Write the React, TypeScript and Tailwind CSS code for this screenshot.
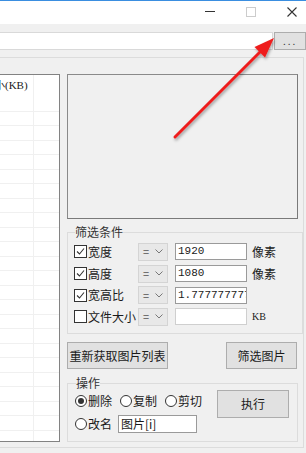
import React from "react";

const ui = "font-['Noto_Sans_CJK_SC','Noto_Sans',sans-serif]";

function Check({ on }: { on?: boolean }) {
  return (
    <span className="flex h-[13px] w-[13px] shrink-0 items-center justify-center border border-[#333] bg-white">
      {on && (
        <svg width="9" height="9" viewBox="0 0 9 9">
          <path d="M1 4.5 L3.5 7 L8 1.5" fill="none" stroke="#333" strokeWidth="1.1" />
        </svg>
      )}
    </span>
  );
}

function Radio({ on }: { on?: boolean }) {
  return (
    <span className="flex h-[12px] w-[12px] shrink-0 items-center justify-center rounded-full border border-[#333] bg-white">
      {on && <span className="h-[6px] w-[6px] rounded-full bg-[#333]" />}
    </span>
  );
}

function Combo() {
  return (
    <div className="ml-auto flex h-[18px] w-[30px] shrink-0 items-center justify-between border border-[#d4d4d4] bg-[#e8e8e8] px-[4px]">
      <span className="text-[11px] leading-none text-[#555]">=</span>
      <svg width="8" height="5" viewBox="0 0 8 5">
        <path d="M0.5 0.5 L4 4 L7.5 0.5" fill="none" stroke="#777" strokeWidth="1" />
      </svg>
    </div>
  );
}

function FilterRow({ on, label, value, unit, dim }: { on?: boolean; label: string; value: string; unit?: string; dim?: boolean }) {
  return (
    <div className="flex h-[21.7px] items-center">
      <Check on={on} />
      <span className="ml-[1px] w-[50px] whitespace-nowrap leading-none">{label}</span>
      <Combo />
      <div
        className={`ml-[7px] h-[17px] w-[72px] shrink-0 overflow-hidden whitespace-nowrap border bg-white pl-[2px] font-['Liberation_Mono',monospace] text-[11px] leading-[15px] ${
          dim ? "border-[#cfcfcf]" : "border-[#9a9a9a]"
        }`}
      >
        {value}
      </div>
      <span className={`ml-[5px] w-[44px] whitespace-nowrap leading-none ${unit === "KB" ? "font-['Liberation_Serif',serif] text-[10px]" : ""}`}>
        {unit}
      </span>
    </div>
  );
}

function Btn({ children, className }: { children: React.ReactNode; className: string }) {
  return (
    <div className={`flex items-center justify-center border border-[#adadad] bg-[#e1e1e1] ${className}`}>{children}</div>
  );
}

export default function App() {
  return (
    <div className={`relative h-[453px] w-[306px] overflow-hidden bg-[#f0f0f0] text-[12px] text-[#1a1a1a] ${ui}`}>
      {/* title bar */}
      <div className="relative flex h-[24px] items-start border-t border-[#3a8ee0] bg-white">
        <div className="ml-[205px] mt-[10px] h-[1px] w-[10px] bg-[#333]" />
        <div className="ml-[31px] mt-[6px] h-[10px] w-[10px] border border-[#cccccc]" />
        <svg className="ml-[31px] mt-[6px]" width="10" height="10" viewBox="0 0 10 10">
          <path d="M0.5 0.5 L9.5 9.5 M9.5 0.5 L0.5 9.5" stroke="#333" strokeWidth="1.1" />
        </svg>
      </div>

      {/* path row */}
      <div className="mt-[8px] flex h-[18px]">
        <div className="-ml-[2px] w-[277px] border border-[#d9d9d9] bg-white" />
        <Btn className="ml-[1px] w-[32px] pb-[2px] text-[10px] tracking-[2px] text-[#333]">...</Btn>
      </div>

      {/* main panel */}
      <div className="mt-[7px] flex h-[391px] w-[304px] border-b border-r border-t border-[#dcdcdc] pt-[16px]">
        {/* list */}
        <div className="-ml-[6px] flex h-[368px] w-[66px] shrink-0 flex-col overflow-hidden border border-[#828282] bg-white">
          <div className="flex h-[22px] shrink-0">
            <div className="relative w-[39px] border-r border-[#f0f0f0]">
              <span className="absolute -left-[1px] top-[2px] whitespace-nowrap font-['Liberation_Serif',serif] text-[11px]">小(KB)</span>
            </div>
          </div>
          {Array.from({ length: 24 }).map((_, i) => (
            <div key={i} className="flex h-[14.5px] shrink-0 border-b border-[#f0f0f0]">
              <div className="w-[39px] border-r border-[#f0f0f0]" />
            </div>
          ))}
        </div>

        {/* right column */}
        <div className="ml-[7px] flex w-[231px] flex-col">
          <div className="h-[145px] border border-b-[#7a7a7a] border-l-[#8a8a8a] border-r-[#7a7a7a] border-t-[#8a8a8a] bg-[#f0f0f0]" />

          <fieldset className="mt-[5px] h-[110px] border border-[#dcdcdc] px-[6px]">
            <legend className="ml-[1px] px-0 leading-[16px] text-[#333]">筛选条件</legend>
            <div className="mt-[1px] flex flex-col">
              <FilterRow on label="宽度" value="1920" unit="像素" />
              <FilterRow on label="高度" value="1080" unit="像素" />
              <FilterRow on label="宽高比" value="1.7777777777" />
              <FilterRow label="文件大小" value="" unit="KB" dim />
            </div>
          </fieldset>

          <div className="mt-[8px] flex h-[27px] justify-between">
            <Btn className="w-[101px]">重新获取图片列表</Btn>
            <Btn className="mr-[1px] w-[71px]">筛选图片</Btn>
          </div>

          <fieldset className="mt-[6px] h-[67px] border border-[#dcdcdc] px-[7px]">
            <legend className="ml-[1px] px-0 leading-[16px] text-[#333]">操作</legend>
            <div className="flex">
              <div className="flex flex-col">
                <div className="flex h-[20px] items-center gap-[1px]">
                  <Radio on />
                  <span className="mr-[7px]">删除</span>
                  <Radio />
                  <span className="mr-[7px]">复制</span>
                  <Radio />
                  <span>剪切</span>
                </div>
                <div className="mt-[4px] flex h-[18px] items-center gap-[1px]">
                  <Radio />
                  <span>改名</span>
                  <div className="ml-[5px] h-[18px] w-[79px] border border-[#9a9a9a] bg-white pl-[2px] leading-[16px]">图片[i]</div>
                </div>
              </div>
              <Btn className="ml-auto mr-[1px] mt-[-1px] h-[28px] w-[72px]">执行</Btn>
            </div>
          </fieldset>
        </div>
      </div>

      {/* red arrow annotation */}
      <svg className="pointer-events-none absolute left-0 top-0" width="306" height="453" viewBox="0 0 306 453">
        <defs>
          <filter id="sh" x="-20%" y="-20%" width="140%" height="140%">
            <feDropShadow dx="1" dy="2" stdDeviation="1.5" floodColor="#000" floodOpacity="0.35" />
          </filter>
        </defs>
        <g filter="url(#sh)">
          <line x1="175" y1="137" x2="262" y2="50" stroke="#ee1c1c" strokeWidth="3" strokeLinecap="round" />
          <polygon points="274,38 265,57.5 254.5,47" fill="#ee1c1c" />
        </g>
      </svg>
    </div>
  );
}
